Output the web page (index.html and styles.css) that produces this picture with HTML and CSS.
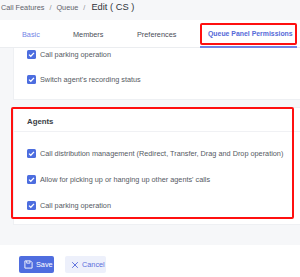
FILE: index.html
```html
<!DOCTYPE html>
<html>
<head>
<meta charset="utf-8">
<link rel="stylesheet" href="styles.css">
</head>
<body>
<div class="page">
  <div class="crumbs">
    <span class="crumb">Call Features</span><span class="sep">/</span><span class="crumb">Queue</span><span class="sep">/</span><span class="current">Edit ( CS )</span>
  </div>
  <div class="tabs">
    <div class="tab tab-basic">Basic</div>
    <div class="tab tab-members">Members</div>
    <div class="tab tab-prefs">Preferences</div>
    <div class="tab tab-active">Queue Panel Permissions<span class="mark mark-tab"></span></div>
  </div>
  <div class="content">
    <div class="panel panel-top">
      <div class="item"><span class="cb"><svg viewBox="0 0 9 9" width="9" height="9"><path d="M2 4.6 L3.8 6.3 L7 2.9" fill="none" stroke="#fff" stroke-width="1.3"/></svg></span>Call parking operation</div>
      <div class="item"><span class="cb"><svg viewBox="0 0 9 9" width="9" height="9"><path d="M2 4.6 L3.8 6.3 L7 2.9" fill="none" stroke="#fff" stroke-width="1.3"/></svg></span>Switch agent's recording status</div>
    </div>
    <div class="panel panel-agents">
      <span class="mark mark-agents"></span>
      <div class="panel-head">Agents</div>
      <div class="panel-body">
        <div class="item"><span class="cb"><svg viewBox="0 0 9 9" width="9" height="9"><path d="M2 4.6 L3.8 6.3 L7 2.9" fill="none" stroke="#fff" stroke-width="1.3"/></svg></span>Call distribution management (Redirect, Transfer, Drag and Drop operation)</div>
        <div class="item"><span class="cb"><svg viewBox="0 0 9 9" width="9" height="9"><path d="M2 4.6 L3.8 6.3 L7 2.9" fill="none" stroke="#fff" stroke-width="1.3"/></svg></span>Allow for picking up or hanging up other agents' calls</div>
        <div class="item"><span class="cb"><svg viewBox="0 0 9 9" width="9" height="9"><path d="M2 4.6 L3.8 6.3 L7 2.9" fill="none" stroke="#fff" stroke-width="1.3"/></svg></span>Call parking operation</div>
      </div>
    </div>
  </div>
  <div class="footer">
    <button class="btn btn-save"><svg class="ico" viewBox="0 0 10 10" width="9" height="9"><path d="M1 1 H7.2 L9 2.8 V9 H1 Z" fill="none" stroke="#fff" stroke-width="1"/><path d="M3 1 V3.5 H6.6 V1" fill="none" stroke="#fff" stroke-width="0.9"/></svg>Save</button>
    <button class="btn btn-cancel"><svg class="ico" viewBox="0 0 10 10" width="8" height="8"><path d="M1.5 1.5 L8.5 8.5 M8.5 1.5 L1.5 8.5" fill="none" stroke="#5b6fdc" stroke-width="1.2"/></svg>Cancel</button>
  </div>
</div>
</body>
</html>
```

FILE: styles.css
```css
* { box-sizing: border-box; }
html, body { margin: 0; padding: 0; }
body {
  width: 300px;
  height: 277px;
  overflow: hidden;
  font-family: "Liberation Sans", Arial, sans-serif;
  background: #f6f7f9;
}
.page { display: flex; flex-direction: column; height: 277px; }
.crumbs {
  height: 20px;
  display: flex;
  align-items: center;
  padding: 0 0 6px 1px;
  font-size: 7.3px;
  color: #5f636b;
}
.sep { margin: 0 5px; color: #8a8e96; }
.current { font-size: 9.3px; color: #2f333a; margin-left: 1px; }
.tabs {
  background: #fff;
  height: 28px;
  display: flex;
  align-items: stretch;
  border-bottom: 1px solid #ebedf0;
  font-size: 7.3px;
  color: #4a4e57;
  white-space: nowrap;
}
.tab { display: flex; align-items: center; padding-top: 1px; position: relative; }
.tab-basic { margin-left: 22px; width: 51px; color: #7284e6; }
.tab-members { width: 64px; }
.tab-prefs { width: 63px; }
.tab-active {
  width: 97px;
  padding: 1px 0 0 8px;
  font-size: 6.9px;
  color: #5468d8;
  font-weight: bold;
  border-bottom: 2px solid #7183e4;
  margin-bottom: -1px;
}
.mark { position: absolute; border: 2px solid #ff1010; border-radius: 2px; pointer-events: none; }
.mark-tab { left: 0; top: 3px; width: 97px; height: 22px; }
.content {
  padding-left: 13px;
  display: flex;
  flex-direction: column;
  gap: 7px;
}
.panel { background: #fff; border: 1px solid #eef0f3; border-right: none; position: relative; }
.panel-top {
  border-top: none;
  display: flex;
  flex-direction: column;
  gap: 13px;
  padding: 0 0 14px 13px;
  height: 52px;
}
.item {
  display: flex;
  align-items: center;
  height: 12px;
  font-size: 7.3px;
  color: #555a63;
  white-space: nowrap;
}
.cb {
  flex: none;
  width: 9px;
  height: 9px;
  background: #4c6ddf;
  border-radius: 1.5px;
  margin-right: 4px;
  display: flex;
}
.panel-agents { height: 118px; }
.mark-agents { left: -3px; top: -1px; width: 283px; height: 112px; }
.panel-head {
  height: 24px;
  padding: 9px 0 0 13px;
  font-size: 7.8px;
  font-weight: bold;
  color: #3a3e45;
  border-bottom: 1px solid #f0f1f4;
}
.panel-body {
  display: flex;
  flex-direction: column;
  gap: 14px;
  padding: 15px 0 0 13px;
}
.footer {
  margin-top: 20px;
  flex: 1;
  background: #fff;
  display: flex;
  gap: 11px;
  align-items: flex-start;
  padding: 11px 0 0 19px;
}
.btn {
  height: 17px;
  border: none;
  border-radius: 2px;
  font-family: inherit;
  font-size: 7.3px;
  display: flex;
  align-items: center;
  gap: 3px;
  padding: 0 0 0 5px;
  white-space: nowrap;
}
.ico { flex: none; display: block; }
.btn-save { width: 35px; background: #4f6ddf; color: #fff; }
.btn-cancel { width: 41px; background: #edf0fb; color: #5b6fdc; padding-left: 6px; }
```
